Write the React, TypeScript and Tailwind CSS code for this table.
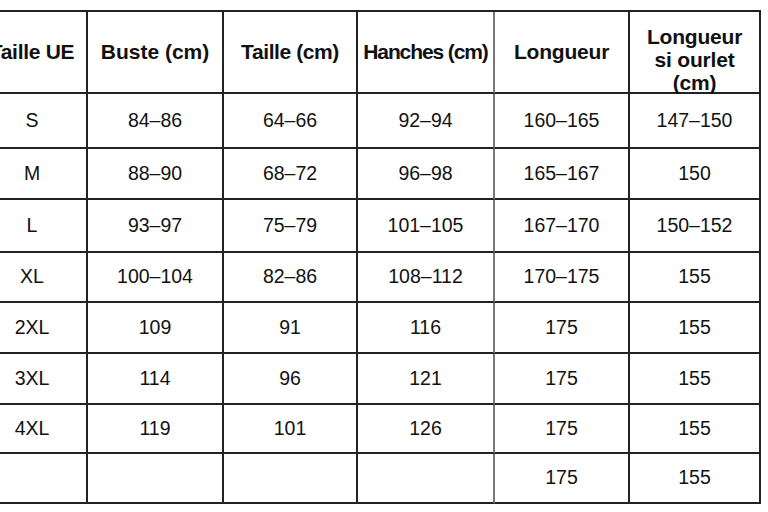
import React from "react";

const headers: { label: React.ReactNode; cls: string }[] = [
  { label: "Taille UE", cls: "tracking-[-0.3px]" },
  { label: "Buste (cm)", cls: "tracking-[0px]" },
  { label: "Taille (cm)", cls: "tracking-[-0.4px]" },
  { label: "Hanches (cm)", cls: "tracking-[-1.1px]" },
  { label: "Longueur", cls: "tracking-[-0.2px]" },
];

const rows: string[][] = [
  ["S", "84–86", "64–66", "92–94", "160–165", "147–150"],
  ["M", "88–90", "68–72", "96–98", "165–167", "150"],
  ["L", "93–97", "75–79", "101–105", "167–170", "150–152"],
  ["XL", "100–104", "82–86", "108–112", "170–175", "155"],
  ["2XL", "109", "91", "116", "175", "155"],
  ["3XL", "114", "96", "121", "175", "155"],
  ["4XL", "119", "101", "126", "175", "155"],
  ["", "", "", "", "175", "155"],
];

const rowHeights = ["h-[55px]", "h-[51px]", "h-[53px]", "h-[50px]", "h-[51px]", "h-[51px]", "h-[49px]", "h-[50px]"];

export default function App() {
  return (
    <div className="w-[768px] h-[512px] overflow-hidden bg-white text-[#111]" style={{ fontFamily: '"Liberation Sans", Arial, sans-serif' }}>
      <div className="ml-[-22px] mt-[10px] w-[783px] grid grid-cols-[110px_136px_134px_137px_135px_131px] border-t-2 border-[#222]">
        {headers.map((h, i) => (
          <div
            key={i}
            className={`h-[82px] flex items-center justify-center border-r-2 border-b-2 border-b-[#222] font-bold text-[21px] leading-[24px] text-center ${h.cls} ${i === 3 ? "border-r-[#777]" : "border-r-[#222]"}`}
          >
            {h.label}
          </div>
        ))}
        <div className="h-[82px] relative border-r-2 border-b-2 border-[#222]">
          <div className="absolute left-0 right-0 top-[13px] font-bold text-[21px] leading-[23px] text-center tracking-[-0.2px]">
            Longueur
            <br />
            si ourlet
            <br />
            (cm)
          </div>
        </div>
        {rows.map((r, ri) =>
          r.map((c, ci) => (
            <div
              key={`${ri}-${ci}`}
              className={`${rowHeights[ri]} flex items-center justify-center border-r-2 border-b-2 border-b-[#222] text-[19.5px] leading-none ${ci === 3 ? "border-r-[#777]" : "border-r-[#222]"}`}
            >
              {c}
            </div>
          ))
        )}
      </div>
    </div>
  );
}
